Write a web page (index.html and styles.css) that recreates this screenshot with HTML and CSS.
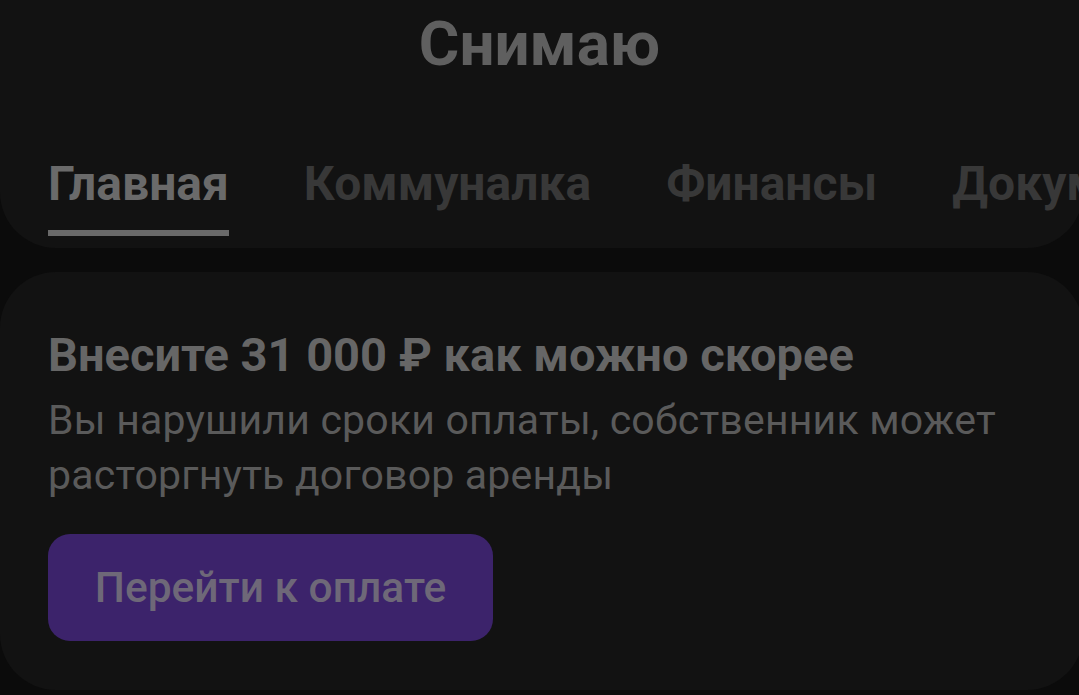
FILE: index.html
```html
<!DOCTYPE html>
<html lang="ru">
<head>
<meta charset="utf-8">
<title>Снимаю</title>
<link rel="stylesheet" href="styles.css">
</head>
<body>
  <header class="top-card">
    <h1 class="title">Снимаю</h1>
    <nav class="tabs">
      <span class="tab tab-active">Главная</span>
      <span class="tab">Коммуналка</span>
      <span class="tab">Финансы</span>
      <span class="tab">Документы</span>
    </nav>
  </header>
  <section class="alert-card">
    <h2 class="alert-title">Внесите 31 000 ₽ как можно скорее</h2>
    <p class="alert-text">Вы нарушили сроки оплаты, собственник может расторгнуть договор аренды</p>
    <button class="pay-btn">Перейти к оплате</button>
  </section>
</body>
</html>
```
FILE: styles.css
```css
html, body {
  margin: 0;
  padding: 0;
  background: #0b0b0b;
  font-family: Roboto, "Noto Sans", sans-serif;
  overflow: hidden;
}
body {
  width: 1079px;
  height: 695px;
}
.top-card {
  background: #121212;
  width: 1083px;
  height: 248px;
  box-sizing: border-box;
  border-radius: 0 0 56px 56px;
  padding-top: 13px;
  overflow: hidden;
}
.title {
  margin: 0;
  text-align: center;
  font-size: 62px;
  line-height: 1;
  font-weight: 700;
  color: #5f5f5f;
  padding-right: 4px;
}
.tabs {
  display: flex;
  gap: 75px;
  margin-top: 85px;
  padding-left: 48px;
  white-space: nowrap;
}
.tab {
  font-size: 48px;
  line-height: 1;
  font-weight: 700;
  color: #383838;
  padding-bottom: 22px;
  border-bottom: 6px solid transparent;
}
.tab-active {
  color: #6a6a6a;
  border-bottom-color: #6a6a6a;
}
.alert-card {
  background: #121212;
  width: 1083px;
  margin-top: 24px;
  height: 418px;
  box-sizing: border-box;
  border-radius: 56px;
  padding: 59px 52px 48px 48px;
}
.alert-title {
  margin: 0;
  font-size: 47px;
  line-height: 1;
  font-weight: 700;
  color: #666666;
}
.alert-text {
  margin: 15px 0 0;
  font-size: 41px;
  letter-spacing: 0.2px;
  line-height: 55px;
  font-weight: 400;
  color: #5a5a5a;
}
.pay-btn {
  margin-top: 31px;
  width: 445px;
  height: 107px;
  border: none;
  border-radius: 22px;
  background: #3c236b;
  color: #6e6878;
  font-family: inherit;
  font-size: 42.5px;
  font-weight: 500;
  padding: 0;
  cursor: pointer;
}
```
